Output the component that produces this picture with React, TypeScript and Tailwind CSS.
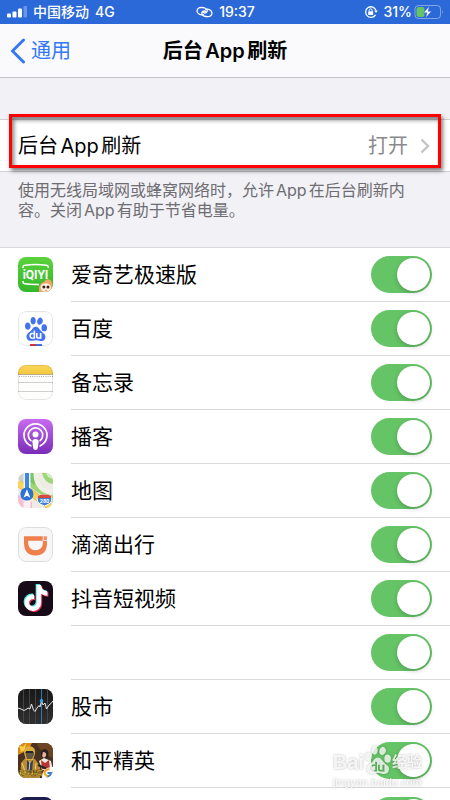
import type { ReactNode } from 'react';
import { SiBaidu } from 'react-icons/si';
import { FaTiktok } from 'react-icons/fa6';

const IqiyiIcon = () => (
  <svg viewBox="0 0 35 35" className="h-full w-full" aria-hidden>
    <defs>
      <linearGradient id="iqiyi-bg" x1="0" y1="0" x2="0" y2="1">
        <stop offset="0" stopColor="#5ad23c" />
        <stop offset="1" stopColor="#35b62c" />
      </linearGradient>
    </defs>
    <rect width="35" height="35" fill="url(#iqiyi-bg)" />
    <path d="M5 11V10Q5 8.400 6.800 8.200Q17.500 6.600 28.500 8.200Q30.300 8.500 30.300 10V11" fill="none" stroke="#fff" strokeWidth="1.500" />
    <path d="M5 24V25Q5 26.600 6.800 26.800Q13 27.800 21 27.500" fill="none" stroke="#fff" strokeWidth="1.500" />
    <text x="17.500" y="22" textAnchor="middle" fontSize="12" fontWeight="700" fill="#fff" fontFamily="Roboto, sans-serif">iQIYI</text>
    <path d="M21 35Q20 26 26 25Q28 21 32 23Q35 25 34 29L35 35Z" fill="#f3a467" />
    <ellipse cx="27.800" cy="30.500" rx="5.200" ry="4.300" fill="#fff0df" />
    <circle cx="25.900" cy="30" r="1.500" fill="#35221d" />
    <circle cx="30" cy="30" r="1.500" fill="#35221d" />
    <path d="M27 33Q28 34 29 33" stroke="#d96b59" strokeWidth=".7" fill="none" />
  </svg>
);

const BaiduIcon = () => (
  <div className="relative flex h-full w-full items-center justify-center bg-white">
    <SiBaidu className="h-6 w-6 text-[#4373ee]" aria-hidden />
    <span className="absolute bottom-0 left-3 flex h-0.5 w-3">
      <span className="flex-1 bg-[#d7373c]" />
      <span className="flex-1 bg-[#4373ee]" />
    </span>
  </div>
);

const NotesIcon = () => (
  <svg viewBox="0 0 35 35" className="h-full w-full" aria-hidden>
    <defs>
      <linearGradient id="notes-top" x1="0" y1="0" x2="0" y2="1">
        <stop offset="0" stopColor="#fbd75b" />
        <stop offset="1" stopColor="#f4c83d" />
      </linearGradient>
    </defs>
    <rect width="35" height="35" fill="#fefefd" />
    <rect width="35" height="9" fill="url(#notes-top)" />
    <path d="M0 9.500H35" stroke="#b8ab86" strokeWidth="1" />
    <path d="M1 11.500H35" stroke="#aaa" strokeWidth="1" strokeDasharray="1 1.200" />
    <path d="M0 17.500H35M0 26.500H35" stroke="#d0d0d0" strokeWidth="1" />
  </svg>
);

const PodcastIcon = () => (
  <svg viewBox="0 0 35 35" className="h-full w-full" aria-hidden>
    <defs>
      <linearGradient id="podcast-bg" x1="0" y1="0" x2="0" y2="1">
        <stop offset="0" stopColor="#c86bf0" />
        <stop offset="1" stopColor="#792cb8" />
      </linearGradient>
    </defs>
    <rect width="35" height="35" fill="url(#podcast-bg)" />
    <g fill="none" stroke="#fff" strokeLinecap="round">
      <path d="M12.800 26.800A11.500 11.500 0 1 1 22.200 26.800" strokeWidth="1.700" />
      <path d="M12.900 21.700A7.200 7.200 0 1 1 22.100 21.700" strokeWidth="1.700" />
    </g>
    <circle cx="17.500" cy="15.600" r="3" fill="#fff" />
    <path d="M14.300 22.500Q14.300 20 17.500 20Q20.700 20 20.700 22.500L19.800 29Q19.500 31 17.500 31Q15.500 31 15.200 29Z" fill="#fff" />
  </svg>
);

const MapsIcon = () => (
  <svg viewBox="0 0 35 35" className="h-full w-full" aria-hidden>
    <rect width="35" height="35" fill="#eeece3" />
    <path d="M0 0H7V11L0 6Z" fill="#cbd0cb" />
    <path d="M13 0H20Q20 13 35 19V30L12 14Z" fill="#9bd677" />
    <path d="M12 0H16L17 12L12 9Z" fill="#78c85b" />
    <path d="M18 0Q18 17 35 20" fill="none" stroke="#f1efe8" strokeWidth="5" />
    <path d="M24 0H35V11Q26 10 24 0Z" fill="#9bd677" />
    <path d="M28 0H35V6Q29 5 28 0Z" fill="#d6eec7" />
    <path d="M0 10L35 36" stroke="#e5b83b" strokeWidth="7" />
    <path d="M0 10L35 36" stroke="#fbd45a" strokeWidth="5.500" />
    <path d="M0 22L14 29V35H0Z" fill="#f3c0d0" />
    <path d="M5.500 0H12.500V35H5.500Z" fill="#fff" fillOpacity=".75" />
    <path d="M7 0H11V20H7Z" fill="#3c87e4" />
    <circle cx="8.900" cy="21" r="6.600" fill="#2b72d3" />
    <path d="M8.900 16.300L12.300 24.700L8.900 22.800L5.500 24.700Z" fill="#fff" />
    <path d="M20 23Q26.500 20 33 23Q35.500 29 30 31.500L26.500 33L23 31.500Q17.500 29 20 23Z" fill="#3f80d2" stroke="#fff" strokeWidth="1" />
    <path d="M20 22.700Q26.500 20.500 33 22.700L33.300 25H19.700Z" fill="#d9473d" />
    <text x="26.500" y="30" textAnchor="middle" fontSize="5.500" fontWeight="700" fill="#fff" fontFamily="Roboto, sans-serif">280</text>
  </svg>
);

const DidiIcon = () => (
  <svg viewBox="0 0 35 35" className="h-full w-full" aria-hidden>
    <rect width="35" height="35" fill="#f7f7f7" />
    <path d="M6 9.300H24.700V13.700H10.200V16Q10.500 23.200 17.500 23.200Q24.600 23.200 24.900 16V13.700H29V16.500Q28.600 28.400 17.500 28.400Q6.400 28.400 6 16.500Z" fill="#ef7f4c" />
    <path d="M25.500 9.300H29V13H25.500Z" fill="#f4946a" />
  </svg>
);

const DouyinIcon = () => (
  <div className="relative h-full w-full bg-[#170b18]">
    <FaTiktok className="absolute left-1 top-[3px] h-6.5 w-6.5 text-[#4fe8e8]" aria-hidden />
    <FaTiktok className="absolute left-1.5 top-[5px] h-6.5 w-6.5 text-[#f5325b]" aria-hidden />
    <FaTiktok className="absolute left-[5px] top-1 h-6.5 w-6.5 text-white" aria-hidden />
  </div>
);

const StocksIcon = () => (
  <svg viewBox="0 0 35 35" className="h-full w-full" aria-hidden>
    <defs>
      <linearGradient id="stocks-bg" x1="0" y1="0" x2="0" y2="1">
        <stop offset="0" stopColor="#181818" />
        <stop offset="1" stopColor="#303030" />
      </linearGradient>
    </defs>
    <rect width="35" height="35" fill="url(#stocks-bg)" />
    <path d="M5.500 0V35M11.500 0V35M17.500 0V35M29.500 0V35" stroke="#454545" strokeWidth="1" />
    <path d="M23.500 0V35" stroke="#3479aa" strokeWidth="1" />
    <path d="M0 19L3 20L6 21.500L8 20.500L10 19L12 20L13.500 15L15.500 21L17 22.500L19 19L21 16.500L22 18L23.500 12L25 16L27 14L28.500 20L31 16L33 14.500L35 12" fill="none" stroke="#e8e8e8" strokeWidth="1" strokeLinejoin="round" />
    <circle cx="23.500" cy="11.700" r="1.800" fill="#36a5ee" />
  </svg>
);

const PeaceEliteIcon = () => (
  <svg viewBox="0 0 35 35" className="h-full w-full" aria-hidden>
    <rect width="35" height="35" fill="#49301f" />
    <path d="M0 0H14L10 7L0 12Z" fill="#dd8c1c" />
    <path d="M1 2L5 4L8 0L7 6L12 5L3 9Z" fill="#ffcf43" />
    <path d="M18 0H35V15L25 10Z" fill="#6d4421" />
    <path d="M2 35L3 20Q7 14 11 15L17 16L22 23V35Z" fill="#b88b32" />
    <path d="M6 10Q6 3 12 3Q18 4 17 11L15 17H8Z" fill="#d9ad40" />
    <path d="M7 9H16V12L14 16H9Z" fill="#665743" />
    <path d="M8 9H15" stroke="#24262a" strokeWidth="2" />
    <path d="M9 17L12 20L15 17L14 30H9Z" fill="#3b4148" />
    <path d="M12 18L11 28" stroke="#c8ced0" strokeWidth="1" />
    <path d="M4 20L8 31M18 20L17 29" stroke="#f1cf72" strokeWidth="1" />
    <path d="M23 13Q22 6 27 6Q32 7 30 14L28 16Z" fill="#2c2021" />
    <path d="M25 9Q29 9 28 13L26 15L24 13Z" fill="#e3b49b" />
    <path d="M21 18L26 15L33 18L35 27H24Z" fill="#eee9df" />
    <path d="M23 17L27 20L31 17L32 26H24Z" fill="#b83434" />
    <path d="M20 22L29 26" stroke="#262626" strokeWidth="2" />
    <text x="1" y="32" fontSize="6" fontWeight="900" fill="#ffd842" stroke="#4b3515" strokeWidth=".3" fontFamily="'Noto Sans CJK SC', sans-serif">和平精英</text>
    <path d="M35 24Q24 24 24 35H35Z" fill="#fff" />
    <path d="M31.500 26.500A4 4 0 0 0 26.500 30" stroke="#f49a28" strokeWidth="2" fill="none" />
    <path d="M26.500 29.500Q27 33 30 33" stroke="#e3bd26" strokeWidth="2" fill="none" />
    <path d="M29.500 30H33Q33 33 29.500 33.300" stroke="#347bc5" strokeWidth="1.800" fill="none" />
  </svg>
);

interface AppEntry {
  id: string;
  name: string;
  icon: ReactNode;
  outlined?: boolean;
}

const apps: AppEntry[] = [
  { id: 'iqiyi', name: '爱奇艺极速版', icon: <IqiyiIcon /> },
  { id: 'baidu', name: '百度', icon: <BaiduIcon />, outlined: true },
  { id: 'notes', name: '备忘录', icon: <NotesIcon />, outlined: true },
  { id: 'podcasts', name: '播客', icon: <PodcastIcon /> },
  { id: 'maps', name: '地图', icon: <MapsIcon /> },
  { id: 'didi', name: '滴滴出行', icon: <DidiIcon />, outlined: true },
  { id: 'douyin', name: '抖音短视频', icon: <DouyinIcon /> },
  { id: 'unnamed', name: '', icon: null },
  { id: 'stocks', name: '股市', icon: <StocksIcon /> },
  { id: 'peace', name: '和平精英', icon: <PeaceEliteIcon /> },
  { id: 'next', name: '', icon: <div className="h-full w-full bg-[#1d1c51]" /> },
];

const StatusBar = () => (
  <div className="grid h-6 shrink-0 grid-cols-[1fr_auto_1fr] items-center bg-[#2c69d8] pl-[7px] pr-1.5 text-sm leading-5 font-medium text-white">
    <div className="flex items-center gap-1.5">
      <svg viewBox="0 0 20 12" className="h-3 w-5" fill="#fff" aria-hidden>
        <rect x="0" y="7.500" width="4" height="4" rx="1" />
        <rect x="5.500" y="5.500" width="4" height="6" rx="1" />
        <rect x="11" y="2.500" width="4" height="9" rx="1" />
        <rect x="16.500" y="0" width="3.500" height="11.500" rx="1" fillOpacity=".3" />
      </svg>
      <span>中国移动</span>
      <span>4G</span>
    </div>
    <div className="flex items-center gap-1.5">
      <svg viewBox="0 0 17 12" className="h-3 w-[17px]" fill="none" stroke="#fff" strokeWidth="1.300" strokeLinecap="round" aria-hidden>
        <path d="M7.200 8.600Q5.300 9.100 3.600 8.400Q1 7.300 1 5Q1.300 1.400 5.500 1.300Q9.300 1.300 10.800 3.600Q11.900 6 9.700 6.900Q7.900 7.400 6.700 5.900" />
        <path d="M9.800 3.400Q11.700 2.900 13.400 3.600Q16 4.700 16 7Q15.700 10.600 11.500 10.700Q7.700 10.700 6.200 8.400Q5.100 6 7.300 5.100Q9.100 4.600 10.300 6.100" />
      </svg>
      <span>19:37</span>
    </div>
    <div className="flex items-center justify-end">
      <svg viewBox="0 0 14 14" className="mr-1.5 h-3.5 w-3.5" fill="none" stroke="#fff" strokeWidth="1.300" aria-hidden>
        <path d="M11.500 9.800A5.300 5.300 0 1 1 12 5.500" />
        <path d="M10.300 5.500H13.700L12 8Z" fill="#fff" stroke="none" />
        <rect x="4.200" y="6.300" width="5" height="3.700" rx=".6" fill="#fff" stroke="none" />
        <path d="M5.200 6.500V5.200Q5.200 3.900 6.700 3.900Q8.200 3.900 8.200 5.200V6.500" strokeWidth="1" />
      </svg>
      <span className="mr-0.5">31%</span>
      <svg viewBox="0 0 30 14" className="h-3.5 w-[30px]" aria-hidden>
        <rect x="1" y=".5" width="25.500" height="13" rx="3.500" fill="none" stroke="#fff" strokeOpacity=".4" />
        <path d="M28 5Q29.500 7 28 9Z" fill="#fff" fillOpacity=".5" />
        <rect x="2.500" y="2" width="8" height="10" rx="2" fill="#64c466" />
        <path d="M15.500 1L9.500 7.800H13L11.500 13L17.500 6.200H14Z" fill="#fff" stroke="#2c69d8" strokeWidth=".5" />
      </svg>
    </div>
  </div>
);

const NavBar = () => (
  <header className="grid h-[54px] shrink-0 grid-cols-[1fr_auto_1fr] items-center border-b border-[#c4c4c7] bg-[#fafafc] px-2.5">
    <a href="#general" className="flex items-center gap-1.5 text-xl text-[#3478f6]">
      <svg viewBox="0 0 15 26" className="h-[26px] w-[15px]" fill="none" stroke="currentColor" strokeWidth="3" strokeLinecap="round" strokeLinejoin="round" aria-hidden>
        <path d="M13.500 2L2.500 13L13.500 24" />
      </svg>
      通用
    </a>
    <h1 className="text-xl font-semibold text-black">后台App刷新</h1>
  </header>
);

const AppRow = ({ app, divided }: { app: AppEntry; divided: boolean }) => (
  <li className="flex h-[54px] items-start pl-[18px]">
    <div
      className={`relative mt-[9px] h-[35px] w-[35px] shrink-0 overflow-hidden rounded-lg ${app.outlined ? 'after:absolute after:inset-0 after:rounded-lg after:border after:border-black/10' : ''}`}
    >
      {app.icon}
    </div>
    <div
      className={`ml-[18px] flex h-full min-w-0 flex-1 items-center justify-between pr-[18px] ${divided ? 'border-b border-[#d9d9db]' : ''}`}
    >
      <label htmlFor={`refresh-${app.id}`} className="text-[21px] leading-7 text-black">
        {app.name}
      </label>
      <input
        id={`refresh-${app.id}`}
        type="checkbox"
        role="switch"
        defaultChecked
        aria-label={app.name || undefined}
        className="relative h-[37px] w-[61px] shrink-0 appearance-none rounded-full bg-gray-200 before:absolute before:left-0.5 before:top-0.5 before:h-[33px] before:w-[33px] before:rounded-full before:bg-white before:shadow-[0_2px_5px_rgba(0,0,0,0.2)] checked:bg-[#65c466] checked:before:left-[26px]"
      />
    </div>
  </li>
);

const Watermark = () => (
  <div
    className="pointer-events-none absolute bottom-2.5 right-7 flex flex-col items-center font-['Liberation_Sans','Noto_Sans_CJK_SC',sans-serif] text-white/80 drop-shadow-[0_0_1px_rgba(0,0,0,0.35)]"
    aria-hidden
  >
    <div className="flex items-end leading-6 font-bold">
      <span className="text-xl leading-6">Bai</span>
      <SiBaidu className="h-7 w-7" />
      <span className="text-[15px]">经验</span>
    </div>
    <span className="text-[11px] leading-4">jingyan.baidu.com</span>
  </div>
);

export default function App() {
  return (
    <div className="relative flex h-screen flex-col overflow-hidden bg-[#f2f1f6] font-[Inter,'Noto_Sans_CJK_SC',sans-serif] [text-autospace:normal]">
      <StatusBar />
      <NavBar />
      <main className="pt-[41px]">
        <div className="relative">
          <button
            type="button"
            className="flex h-[53px] w-full items-center justify-between border-y border-[#d0d0d3] bg-white pl-[18px] pr-5 text-xl"
          >
            <span className="text-black">后台App刷新</span>
            <span className="flex items-center gap-3 text-[#8a8a8e]">
              打开
              <svg viewBox="0 0 10 16" className="h-4 w-2.5" fill="none" stroke="#c4c4c7" strokeWidth="2.400" aria-hidden>
                <path d="M1.500 1.500L8 8L1.500 14.500" />
              </svg>
            </span>
          </button>
          <div className="pointer-events-none absolute -top-[5px] bottom-1 left-[9px] right-[9px] border-3 border-[#fe0000] shadow-[2px_3px_4px_rgba(0,0,0,0.5),inset_2px_3px_4px_rgba(0,0,0,0.5)]" />
        </div>
        <p className="pb-[27px] pl-[18px] pr-9 pt-2 text-base leading-5 text-[#6d6d72]">
          使用无线局域网或蜂窝网络时，允许App在后台刷新内容。关闭App有助于节省电量。
        </p>
        <ul className="border-t border-[#d9d9db] bg-white">
          {apps.map((app, i) => (
            <AppRow key={app.id} app={app} divided={i < apps.length - 1} />
          ))}
        </ul>
      </main>
      <Watermark />
    </div>
  );
}
